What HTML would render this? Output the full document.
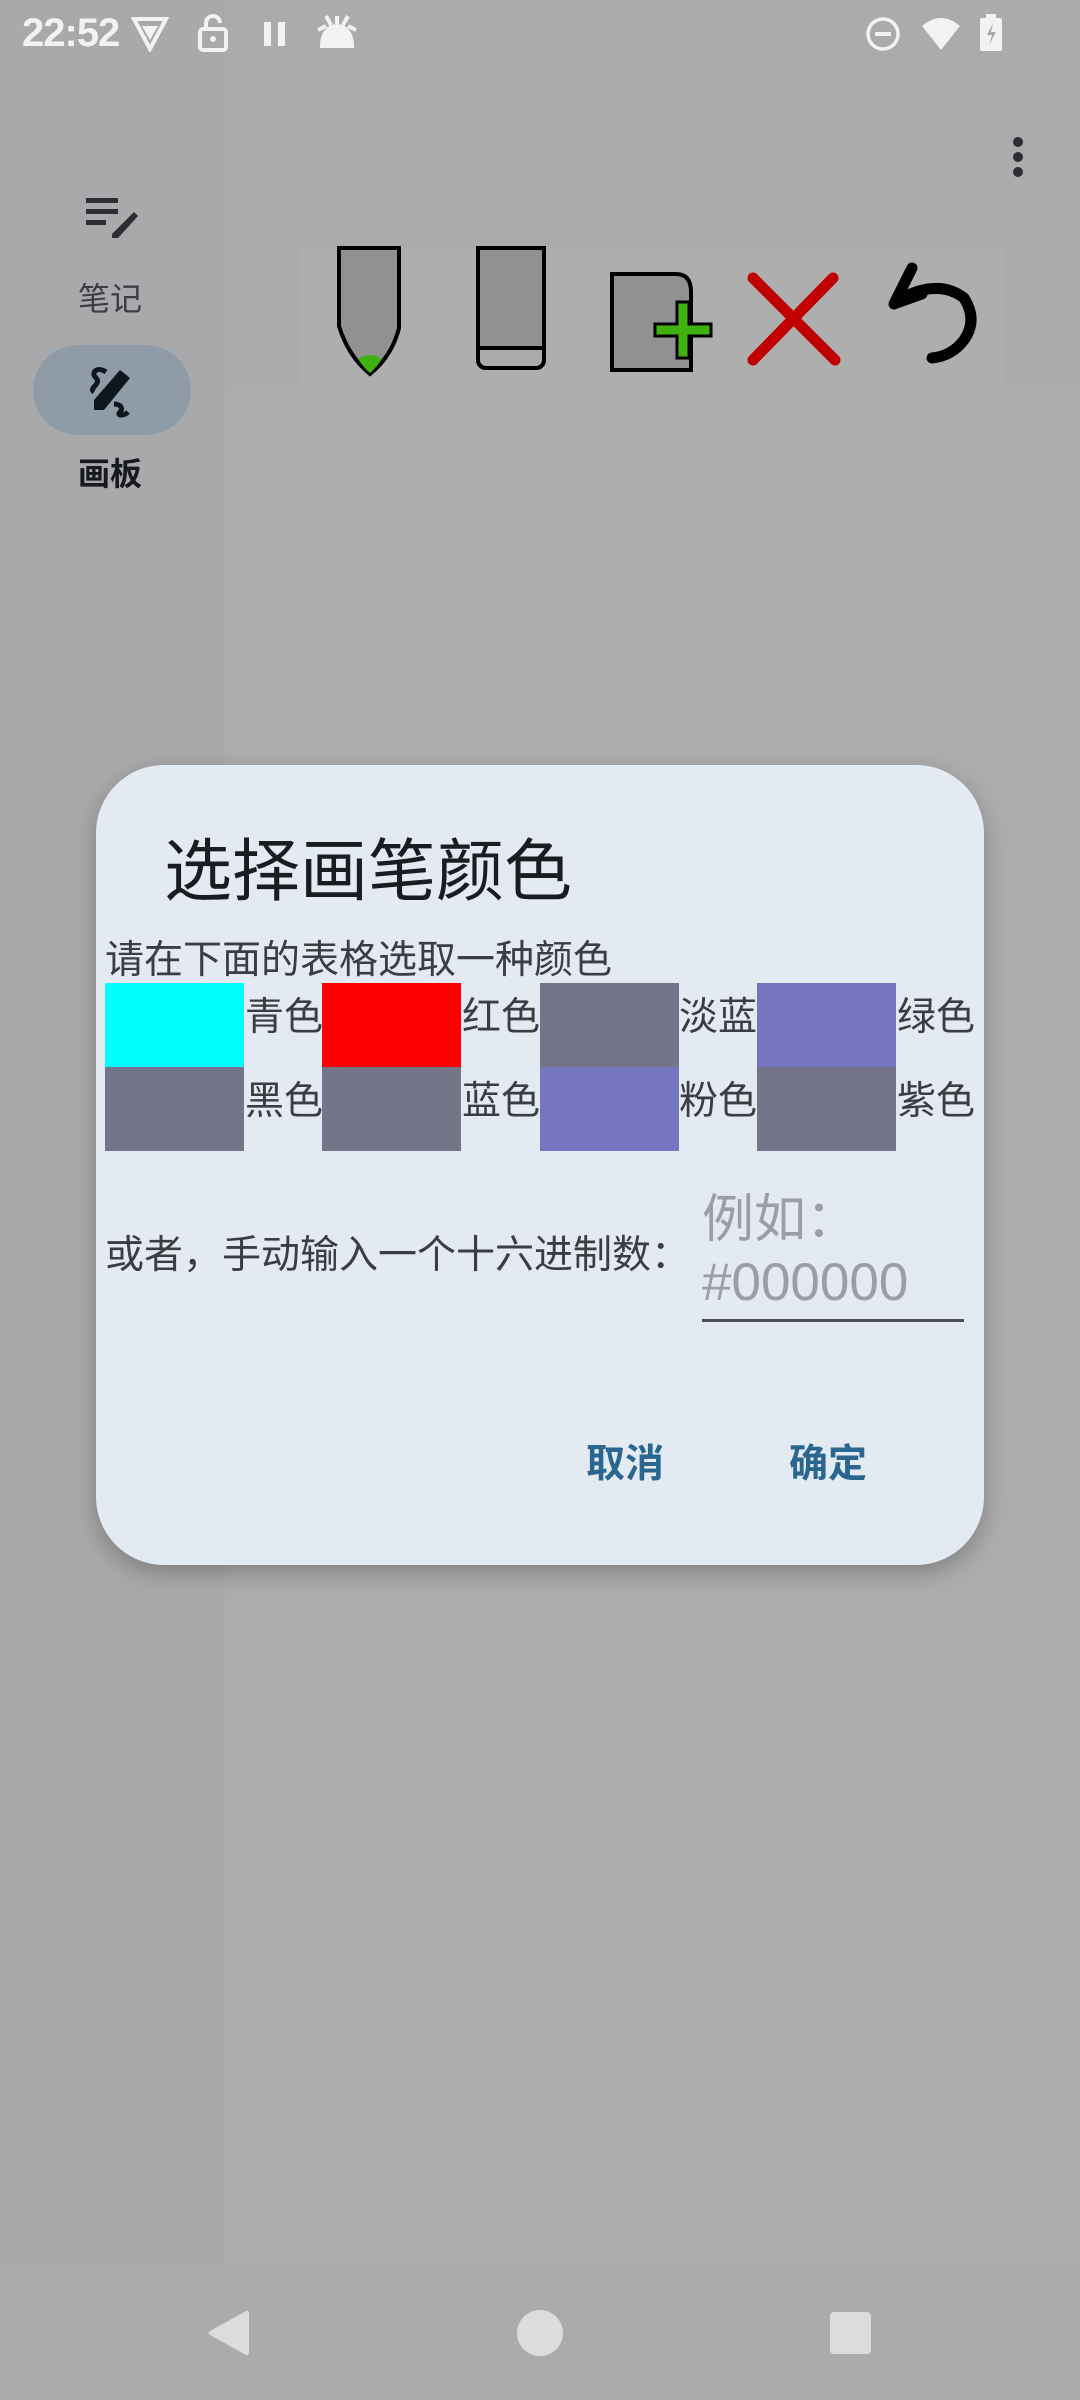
<!DOCTYPE html>
<html><head><meta charset="utf-8"><style>
*{margin:0;padding:0;box-sizing:border-box}
body{width:1080px;height:2400px;background:#ababab;position:relative;overflow:hidden;font-family:"Liberation Sans","Noto Sans CJK SC",sans-serif}
.a{position:absolute}
.lbl{position:absolute;font-size:39px;color:#3a3d42;line-height:84px;white-space:nowrap}
.sw{position:absolute;width:139px;height:84px}
</style></head><body>
<div class="a" style="left:0;top:0;width:225px;height:2265px;background:#a9a9ab"></div>
<div class="a" style="left:225px;top:388px;width:855px;height:1877px;background:#adadad"></div>
<div class="a" style="left:301px;top:248px;width:703px;height:140px;background:#aeaeae"></div>

<!-- status bar -->
<div class="a" style="left:22px;top:10px;font-size:40px;font-weight:bold;letter-spacing:-1px;color:#f2f2f2;line-height:46px">22:52</div>
<svg class="a" style="left:130px;top:16px" width="40" height="36" viewBox="0 0 40 36"><path d="M4 3h32l-16 30z" fill="none" stroke="#f2f2f2" stroke-width="4"/><path d="M12 10h16l-8 14z" fill="#f2f2f2"/></svg>
<svg class="a" style="left:197px;top:14px" width="32" height="38" viewBox="0 0 32 38"><path d="M9 14V9a7 7 0 0 1 14 0" fill="none" stroke="#f2f2f2" stroke-width="4"/><rect x="3" y="15" width="26" height="21" rx="3" fill="none" stroke="#f2f2f2" stroke-width="4"/><circle cx="16" cy="25" r="3" fill="#f2f2f2"/></svg>
<div class="a" style="left:264px;top:22px;width:7px;height:24px;background:#f2f2f2"></div>
<div class="a" style="left:278px;top:22px;width:7px;height:24px;background:#f2f2f2"></div>
<svg class="a" style="left:316px;top:14px" width="42" height="34" viewBox="0 0 42 34"><path d="M6 32c0-12 6-20 15-20s15 8 15 20z M2 16l8-4 M40 16l-8-4 M10 2l5 9 M32 2l-5 9 M21 2v8" fill="#f2f2f2" stroke="#f2f2f2" stroke-width="4"/></svg>
<svg class="a" style="left:864px;top:16px" width="38" height="36" viewBox="0 0 38 36"><circle cx="19" cy="18" r="15" fill="none" stroke="#f2f2f2" stroke-width="3.5"/><rect x="11" y="16" width="16" height="4" fill="#f2f2f2"/></svg>
<svg class="a" style="left:920px;top:16px" width="42" height="36" viewBox="0 0 42 36"><path d="M2 10Q21-6 40 10L21 34z" fill="#f2f2f2"/></svg>
<svg class="a" style="left:978px;top:14px" width="26" height="38" viewBox="0 0 26 38"><rect x="8" y="0" width="10" height="4" fill="#f2f2f2"/><rect x="2" y="4" width="22" height="33" rx="2" fill="#f2f2f2"/><path d="M15 9l-6 12h5l-3 10 7-13h-5z" fill="#ababab"/></svg>

<!-- more -->
<div class="a" style="left:1013px;top:137px;width:10px;height:10px;border-radius:5px;background:#2b2e33"></div>
<div class="a" style="left:1013px;top:152px;width:10px;height:10px;border-radius:5px;background:#2b2e33"></div>
<div class="a" style="left:1013px;top:167px;width:10px;height:10px;border-radius:5px;background:#2b2e33"></div>

<!-- rail -->
<svg class="a" style="left:84px;top:196px" width="56" height="46" viewBox="0 0 56 46"><rect x="2" y="2" width="32" height="5" fill="#2b2e33"/><rect x="2" y="13" width="32" height="5" fill="#2b2e33"/><rect x="2" y="24" width="20" height="5" fill="#2b2e33"/><path d="M50 16l4 4-20 22h-6v-4z" fill="#2b2e33"/></svg>
<div class="a" style="left:78px;top:279px;font-size:32px;color:#3a3d42;line-height:40px">笔记</div>
<div class="a" style="left:33px;top:345px;width:158px;height:90px;border-radius:45px;background:#8f9ba7"></div>
<svg class="a" style="left:84px;top:362px" width="54" height="56" viewBox="0 0 54 56"><path d="M22 10c-8-6-16 0-10 6s-8 10-2 14" fill="none" stroke="#0f171e" stroke-width="5"/><path d="M36 8l10 8-26 32-10 0 0-10z" fill="#0f171e"/><path d="M30 42c6 0 10 4 6 8s4 4 8 0" fill="none" stroke="#0f171e" stroke-width="5"/></svg>
<div class="a" style="left:78px;top:454px;font-size:32px;font-weight:bold;color:#16191d;line-height:40px">画板</div>

<!-- toolbar icons -->
<svg class="a" style="left:336px;top:246px" width="68" height="134" viewBox="0 0 68 134"><path d="M3 2h60v80Q56 110 34 128 12 110 3 80z" fill="#919191" stroke="#000" stroke-width="4"/><path d="M22 113q12-8 24 0Q40 122 34 127 28 122 22 113z" fill="#3fb20f"/></svg>
<svg class="a" style="left:476px;top:246px" width="70" height="126" viewBox="0 0 70 126"><path d="M2 2h66v112a8 8 0 0 1-8 8H10a8 8 0 0 1-8-8z" fill="#919191" stroke="#000" stroke-width="4"/><path d="M2 102h66v12a8 8 0 0 1-8 8H10a8 8 0 0 1-8-8z" fill="#ababab" stroke="#000" stroke-width="4"/></svg>
<svg class="a" style="left:609px;top:271px" width="110" height="102" viewBox="0 0 110 102"><path d="M3 3h64q15 0 15 18v78H3z" fill="#919191" stroke="#000" stroke-width="4"/><path d="M68 31h12v22h22v12H80v22H68V65H46V53h22z" fill="#3fb20f" stroke="#000" stroke-width="3"/></svg>
<svg class="a" style="left:745px;top:272px" width="98" height="94" viewBox="0 0 98 94"><path d="M8 6l82 82M88 6L8 88" stroke="#c00000" stroke-width="11" stroke-linecap="round"/></svg>
<svg class="a" style="left:884px;top:262px" width="100" height="104" viewBox="0 0 100 104"><path d="M28 6L10 42l28-10M14 38q40-22 66-2 14 22 0 42-12 16-32 18" fill="none" stroke="#000" stroke-width="11" stroke-linecap="round" stroke-linejoin="round"/></svg>

<!-- dialog -->
<div class="a" style="left:96px;top:765px;width:888px;height:800px;border-radius:68px;background:#e4eaf2;box-shadow:0 8px 24px rgba(0,0,0,0.25)"></div>
<div class="a" style="left:164px;top:828px;font-size:68px;color:#191c20;line-height:88px;white-space:nowrap">选择画笔颜色</div>
<div class="a" style="left:105px;top:936px;font-size:39px;color:#3a3d42;line-height:50px;white-space:nowrap">请在下面的表格选取一种颜色</div>
<div class="sw" style="left:105px;top:983px;background:#00ffff"></div>
<div class="sw" style="left:322px;top:983px;background:#ff0000"></div>
<div class="sw" style="left:540px;top:983px;background:#757589"></div>
<div class="sw" style="left:757px;top:983px;background:#7575c0"></div>
<div class="sw" style="left:105px;top:1067px;background:#757589"></div>
<div class="sw" style="left:322px;top:1067px;background:#757589"></div>
<div class="sw" style="left:540px;top:1067px;background:#7575c0"></div>
<div class="sw" style="left:757px;top:1067px;background:#757589"></div>
<div class="lbl" style="left:245px;top:976px">青色</div>
<div class="lbl" style="left:462px;top:976px">红色</div>
<div class="lbl" style="left:679px;top:976px">淡蓝</div>
<div class="lbl" style="left:897px;top:976px">绿色</div>
<div class="lbl" style="left:245px;top:1060px">黑色</div>
<div class="lbl" style="left:462px;top:1060px">蓝色</div>
<div class="lbl" style="left:679px;top:1060px">粉色</div>
<div class="lbl" style="left:897px;top:1060px">紫色</div>
<div class="a" style="left:105px;top:1231px;font-size:39px;color:#3a3d42;line-height:50px;white-space:nowrap">或者，手动输入一个十六进制数：</div>
<div class="a" style="left:702px;top:1189px;font-size:52px;color:#9a9ea5;line-height:62px;white-space:nowrap">例如：</div>
<div class="a" style="left:702px;top:1252px;font-size:53px;color:#9a9ea5;line-height:62px;white-space:nowrap">#000000</div>
<div class="a" style="left:702px;top:1319px;width:262px;height:3px;background:#4a4f55"></div>
<div class="a" style="left:586px;top:1440px;font-size:39px;font-weight:bold;color:#2a6690;line-height:50px">取消</div>
<div class="a" style="left:789px;top:1440px;font-size:39px;font-weight:bold;color:#2a6690;line-height:50px">确定</div>

<!-- nav -->
<svg class="a" style="left:206px;top:2308px" width="46" height="50" viewBox="0 0 46 50"><path d="M40 3Q43 2 43 6V44Q43 48 40 47L4 27Q1 25 4 23z" fill="#dcdcdc"/></svg>
<div class="a" style="left:517px;top:2310px;width:46px;height:46px;border-radius:23px;background:#dcdcdc"></div>
<div class="a" style="left:830px;top:2312px;width:41px;height:42px;border-radius:4px;background:#dcdcdc"></div>
</body></html>
